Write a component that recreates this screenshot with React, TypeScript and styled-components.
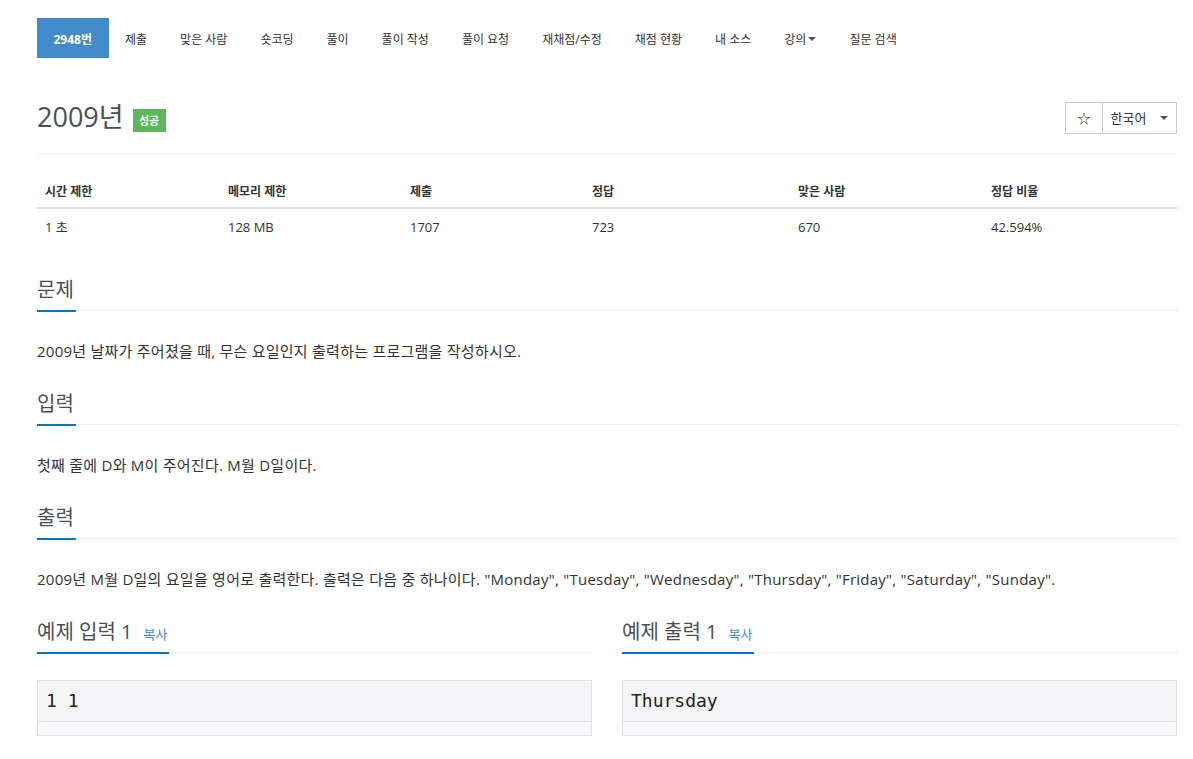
import styled, { createGlobalStyle } from "styled-components";

const GlobalStyle = createGlobalStyle`
  body {
    margin: 0;
    background: #fff;
    color: #333;
    font-family: "Open Sans", "Noto Sans CJK KR", sans-serif;
    font-size: 14px;
  }
`;

const Page = styled.div`
  width: 1140px;
  padding: 18px 0 0 37px;
`;

const Nav = styled.ul`
  display: flex;
  list-style: none;
  margin: 0;
  padding: 0;
  height: 40px;
`;

const NavItem = styled.li<{ $active?: boolean }>`
  display: flex;
  align-items: center;
  padding: 1px 16.5px 0;
  font-size: 12px;
  font-weight: ${(p) => (p.$active ? 700 : 400)};
  color: ${(p) => (p.$active ? "#fff" : "#333")};
  background: ${(p) => (p.$active ? "#428bca" : "transparent")};
`;

const Caret = styled.span`
  display: inline-block;
  width: 0;
  height: 0;
  margin-left: 2px;
  border-top: 4px solid #555;
  border-left: 4px solid transparent;
  border-right: 4px solid transparent;
`;

const PageHeader = styled.div`
  display: flex;
  align-items: center;
  justify-content: space-between;
  margin-top: 40px;
  padding-bottom: 18px;
  border-bottom: 1px solid #eee;
`;

const Title = styled.h1`
  display: flex;
  align-items: center;
  gap: 9px;
  margin: 0;
  font-size: 27px;
  font-weight: 400;
  color: #4a4f55;
  line-height: 37px;
`;

const Badge = styled.span`
  display: inline-flex;
  align-items: center;
  justify-content: center;
  margin-top: 7px;
  width: 33px;
  height: 23px;
  background: #5cb85c;
  color: #fff;
  font-size: 11px;
  font-weight: 700;
`;

const ButtonGroup = styled.div`
  display: flex;
  margin-top: 2px;
`;

const Button = styled.div<{ $width: number }>`
  display: flex;
  align-items: center;
  justify-content: center;
  gap: 12px;
  box-sizing: border-box;
  width: ${(p) => p.$width}px;
  height: 32px;
  border: 1px solid #ccc;
  font-size: 13px;
  color: #333;
  & + & {
    border-left: none;
  }
`;

const Table = styled.table`
  width: 100%;
  margin: 16px 0 33px;
  border-collapse: collapse;
  table-layout: fixed;
`;

const Th = styled.th<{ $width: number }>`
  width: ${(p) => p.$width}px;
  padding: 11px 8px 7px;
  height: 38px;
  box-sizing: border-box;
  text-align: left;
  font-size: 12px;
  font-weight: 700;
  border-bottom: 2px solid #ddd;
`;

const Td = styled.td`
  padding: 8px;
  height: 36px;
  box-sizing: border-box;
  font-size: 13px;
`;

const Section = styled.section`
  margin-top: 30px;
`;

const Heading = styled.div`
  display: flex;
  border-bottom: 1px dotted #ddd;
`;

const HeadingInner = styled.div`
  display: flex;
  align-items: baseline;
  gap: 11px;
  margin-bottom: -2px;
  padding: 0 2px 7px 0;
  border-bottom: 2px solid #0076c0;
  font-size: 20px;
  line-height: 26px;
  color: #4a4f55;
`;

const CopyLink = styled.span`
  font-size: 13px;
  line-height: 13px;
  color: #428bca;
`;

const Text = styled.p`
  margin: 0;
  padding-top: 30px;
  font-size: 15px;
  letter-spacing: 0.25px;
  line-height: 20px;
  color: #333;
`;

const Samples = styled.div`
  display: grid;
  grid-template-columns: 1fr 1fr;
  gap: 30px;
`;

const SampleBox = styled.div`
  margin-top: 27px;
  border: 1px solid #e3e3e6;
  background: #f5f5f7;
`;

const Pre = styled.pre`
  margin: 0;
  padding: 0 8px;
  height: 40px;
  line-height: 40px;
  font-family: "DejaVu Sans Mono", "Liberation Mono", monospace;
  font-size: 18px;
  color: #222;
`;

const ScrollTrack = styled.div`
  height: 13px;
  border-top: 1px solid #e3e3e6;
  background: #f8f8fa;
`;

const navItems = [
  "제출",
  "맞은 사람",
  "숏코딩",
  "풀이",
  "풀이 작성",
  "풀이 요청",
  "재채점/수정",
  "채점 현황",
  "내 소스",
];

const columns: [string, string, number][] = [
  ["시간 제한", "1 초", 183],
  ["메모리 제한", "128 MB", 182],
  ["제출", "1707", 182],
  ["정답", "723", 206],
  ["맞은 사람", "670", 193],
  ["정답 비율", "42.594%", 194],
];

const sections = [
  ["문제", "2009년 날짜가 주어졌을 때, 무슨 요일인지 출력하는 프로그램을 작성하시오."],
  ["입력", "첫째 줄에 D와 M이 주어진다. M월 D일이다."],
  [
    "출력",
    '2009년 M월 D일의 요일을 영어로 출력한다. 출력은 다음 중 하나이다. "Monday", "Tuesday", "Wednesday", "Thursday", "Friday", "Saturday", "Sunday".',
  ],
];

const samples = [
  ["예제 입력 1", "1 1"],
  ["예제 출력 1", "Thursday"],
];

const App = () => {
  return (
    <Page>
      <GlobalStyle />
      <Nav>
        <NavItem $active>2948번</NavItem>
        {navItems.map((item) => (
          <NavItem key={item}>{item}</NavItem>
        ))}
        <NavItem>
          강의
          <Caret />
        </NavItem>
        <NavItem>질문 검색</NavItem>
      </Nav>

      <PageHeader>
        <Title>
          2009년
          <Badge>성공</Badge>
        </Title>
        <ButtonGroup>
          <Button $width={38}>☆</Button>
          <Button $width={74}>
            한국어
            <Caret />
          </Button>
        </ButtonGroup>
      </PageHeader>

      <Table>
        <thead>
          <tr>
            {columns.map(([head, , width]) => (
              <Th key={head} $width={width}>
                {head}
              </Th>
            ))}
          </tr>
        </thead>
        <tbody>
          <tr>
            {columns.map(([head, value]) => (
              <Td key={head}>{value}</Td>
            ))}
          </tr>
        </tbody>
      </Table>

      {sections.map(([title, body]) => (
        <Section key={title}>
          <Heading>
            <HeadingInner>{title}</HeadingInner>
          </Heading>
          <Text>{body}</Text>
        </Section>
      ))}

      <Samples>
        {samples.map(([title, data]) => (
          <Section key={title}>
            <Heading>
              <HeadingInner>
                {title}
                <CopyLink>복사</CopyLink>
              </HeadingInner>
            </Heading>
            <SampleBox>
              <Pre>{data}</Pre>
              <ScrollTrack />
            </SampleBox>
          </Section>
        ))}
      </Samples>
    </Page>
  );
};

export default App;
